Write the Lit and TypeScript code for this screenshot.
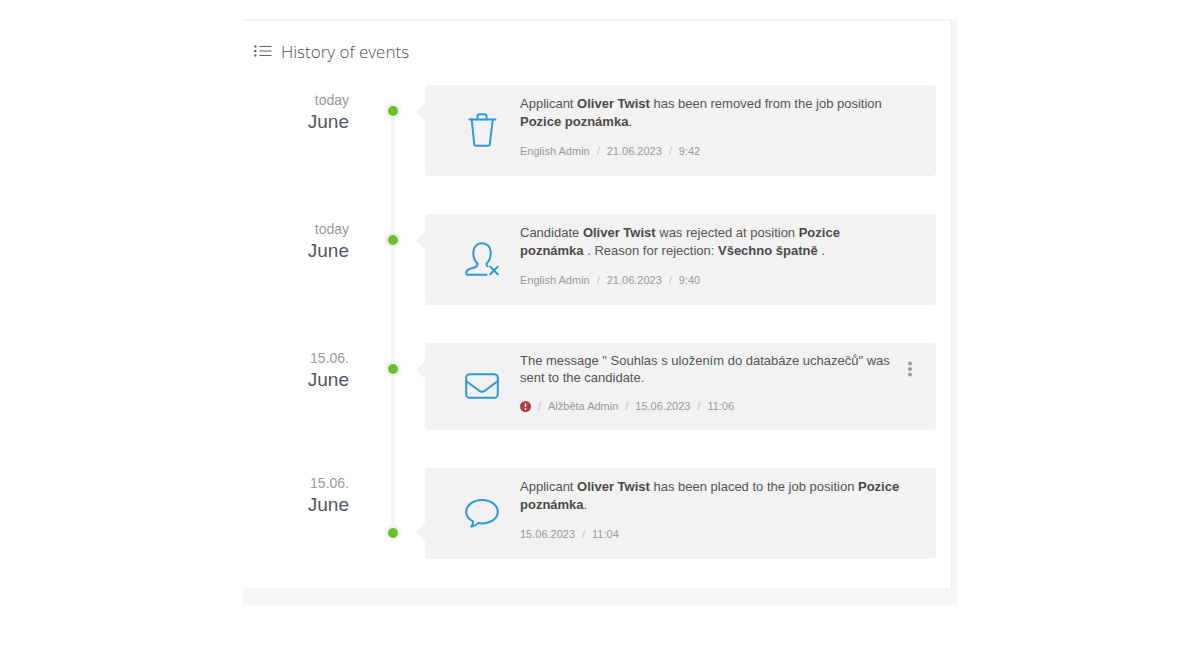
import { LitElement, html, css, svg, nothing } from "lit";
import { customElement, property } from "lit/decorators.js";
import { classMap } from "lit/directives/class-map.js";

type IconName = "trash" | "rejected" | "mail" | "comment";

interface HistoryEvent {
  day: string;
  month: string;
  icon: IconName;
  text: unknown;
  meta: string[];
  alert?: boolean;
  menu?: boolean;
}

const icons = {
  trash: svg`
    <path d="M4.5 6.5H30.5" />
    <path d="M12.5 6.5V3.2Q12.5 1.2 14.5 1.2H19.5Q21.5 1.2 21.5 3.2V6.5" />
    <path d="M6.7 6.5L9.2 31Q9.4 32.8 11.2 32.8H22.8Q24.6 32.8 24.8 31L27.8 6.5" />`,
  rejected: svg`
    <path d="M21.5 32.8H3.2Q1.2 32.8 1.3 30.6C1.5 27.8 4 26.8 6.8 26.2C10.8 25.3 12.8 24.2 12.6 21.6C10.2 19.6 8.3 15.5 8.3 10.6C8.3 4.8 12 1.2 17 1.2C22 1.2 25.8 4.8 25.8 10.6C25.8 15.5 24 19.4 21.6 21.6C21.3 22.8 21.6 23.4 22.4 24.2" />
    <path d="M25.2 24.6L32.8 32.2M32.8 24.6L25.2 32.2" />`,
  mail: svg`
    <rect x="1.2" y="5.2" width="31.6" height="23.6" rx="3.6" />
    <path d="M1.4 12.2L14.2 21.8Q17 23.6 19.8 21.8L32.6 12.2" />`,
  comment: svg`
    <path d="M17 4C25.6 4 32.8 9 32.8 15.8C32.8 22.6 25.6 27.4 17 27.4C15.6 27.4 14.3 27.3 13.1 27.1C11 29.4 9.2 30.4 6.4 30.8C7.8 28.8 8.2 27.4 8 25.4C3.8 23.2 1.2 19.8 1.2 15.8C1.2 9 8.4 4 17 4Z" />`,
};

const events: HistoryEvent[] = [
  {
    day: "today",
    month: "June",
    icon: "trash",
    text: html`Applicant <b>Oliver Twist</b> has been removed from the job position <b>Pozice poznámka</b>.`,
    meta: ["English Admin", "21.06.2023", "9:42"],
  },
  {
    day: "today",
    month: "June",
    icon: "rejected",
    text: html`Candidate <b>Oliver Twist</b> was rejected at position <b>Pozice poznámka</b> . Reason for rejection: <b>Všechno špatně</b> .`,
    meta: ["English Admin", "21.06.2023", "9:40"],
  },
  {
    day: "15.06.",
    month: "June",
    icon: "mail",
    text: html`The message " Souhlas s uložením do databáze uchazečů" was sent to the candidate.`,
    meta: ["Alžběta Admin", "15.06.2023", "11:06"],
    alert: true,
    menu: true,
  },
  {
    day: "15.06.",
    month: "June",
    icon: "comment",
    text: html`Applicant <b>Oliver Twist</b> has been placed to the job position <b>Pozice poznámka</b>.`,
    meta: ["15.06.2023", "11:04"],
  },
];

@customElement("history-card")
class HistoryCard extends LitElement {
  @property({ attribute: false }) event!: HistoryEvent;

  static styles = css`
    :host {
      display: block;
    }
    .card {
      display: grid;
      grid-template-columns: 34px minmax(0, 1fr) 36px;
      padding: 10px 0 17px 40px;
      border-radius: 4px;
      background: #f2f2f2;
    }
    .icon {
      align-self: center;
      width: 34px;
      height: 34px;
      margin-top: 5px;
      fill: none;
      stroke: #2e97de;
      stroke-width: 2;
      stroke-linejoin: round;
      stroke-linecap: round;
    }
    .body {
      padding-left: 21px;
    }
    .text {
      margin: 0;
      font-size: 13px;
      line-height: 18px;
      color: #555;
    }
    .text b {
      color: #4a4a4a;
    }
    .compact {
      padding: 9px 0 16px 40px;
    }
    .compact .text {
      line-height: 17px;
    }
    .meta {
      display: flex;
      align-items: center;
      margin: 12px 0 0;
      padding: 0;
      list-style: none;
      font-size: 11px;
      line-height: 16px;
      color: #999;
    }
    .meta li {
      display: flex;
      align-items: center;
    }
    .meta li + li::before {
      content: "/";
      width: 17px;
      text-align: center;
      color: #c4c4c4;
    }
    .alert {
      width: 11px;
      height: 11px;
    }
    .menu {
      align-self: start;
      display: grid;
      place-items: center;
      width: 20px;
      height: 20px;
      margin: 7px 0 0;
      padding: 0;
      border: 0;
      background: none;
      cursor: pointer;
    }
  `;

  render() {
    const e = this.event;
    return html`
      <article class=${classMap({ card: true, compact: !!e.menu })}>
        <svg class="icon" viewBox="0 0 34 34" aria-hidden="true">${icons[e.icon]}</svg>
        <div class="body">
          <p class="text">${e.text}</p>
          <ul class="meta">
            ${e.alert
              ? html`<li>
                  <svg class="alert" viewBox="0 0 11 11" role="img" aria-label="Alert">
                    <circle cx="5.5" cy="5.5" r="5.5" fill="#b03a3e" />
                    <path d="M5.5 2.4V6" stroke="#fff" stroke-width="1.5" />
                    <circle cx="5.5" cy="8" r="0.9" fill="#fff" />
                  </svg>
                </li>`
              : nothing}
            ${e.meta.map((m) => html`<li>${m}</li>`)}
          </ul>
        </div>
        ${e.menu
          ? html`<button class="menu" type="button" aria-label="More actions">
              <svg width="4" height="16" viewBox="0 0 4 16" fill="#9b9b9b" aria-hidden="true">
                <circle cx="2" cy="2.6" r="2" />
                <circle cx="2" cy="8" r="2" />
                <circle cx="2" cy="13.4" r="2" />
              </svg>
            </button>`
          : nothing}
      </article>
    `;
  }
}

@customElement("app-root")
class AppRoot extends LitElement {
  static styles = css`
    :host {
      display: block;
      padding: 19px 16px;
      font-family: "Liberation Sans", Arial, sans-serif;
    }
    .frame {
      max-width: 714px;
      margin: 0 auto;
      padding: 2px 6px 17px 0;
      box-sizing: border-box;
      background: #f6f6f6;
    }
    .panel {
      padding: 17px 15px 29px 0;
      border-top-right-radius: 4px;
      background: #fff;
      box-shadow: 1px 0 2px rgba(0, 0, 0, 0.05);
    }
    .header {
      display: flex;
      align-items: center;
      gap: 9px;
      padding: 0 0 19px 11px;
    }
    .list-icon {
      margin-bottom: 2px;
    }
    .title {
      margin: 0;
      font-family: "Open Sans", sans-serif;
      font-size: 17px;
      font-weight: 300;
      line-height: 28px;
      color: #4c505a;
    }
    .timeline {
      margin: 0;
      padding: 0;
      list-style: none;
    }
    .row {
      display: grid;
      grid-template-columns: 118px 16px minmax(0, 1fr);
      column-gap: 24px;
    }
    .date {
      padding: 6px 12px 0 0;
      text-align: right;
    }
    .day,
    .month {
      display: block;
    }
    .day {
      font-size: 14px;
      line-height: 18px;
      color: #999;
    }
    .month {
      font-size: 19px;
      line-height: 26px;
      color: #525766;
    }
    .rail {
      display: flex;
      flex-direction: column;
      align-items: center;
    }
    .line {
      width: 4px;
      background: #f3f3f3;
    }
    .short {
      flex: 0 0 18px;
    }
    .long {
      flex: 1;
    }
    .blank {
      background: none;
    }
    .dot {
      flex: none;
      box-sizing: border-box;
      width: 16px;
      height: 16px;
      border: 3px solid #f2f2f2;
      border-radius: 50%;
      background: #6cbf2c;
    }
    .entry {
      position: relative;
      padding-bottom: 38px;
    }
    .row:last-child .entry {
      padding-bottom: 0;
    }
    .entry::before {
      content: "";
      position: absolute;
      top: 18px;
      left: -9px;
      border: 9px solid transparent;
      border-left: 0;
      border-right-color: #f2f2f2;
    }
    .row:last-child .entry::before {
      top: auto;
      bottom: 18px;
    }
  `;

  render() {
    const last = events.length - 1;
    return html`
      <main class="frame">
        <section class="panel" aria-labelledby="title">
          <header class="header">
            <svg class="list-icon" width="18" height="12" viewBox="0 0 18 12" aria-hidden="true">
              <path d="M5.5 1.5H17.5M5.5 6H17.5M5.5 10.5H17.5" stroke="#5c6069" stroke-width="1.2" />
              <path d="M0.4 1.5H2.4M0.4 6H2.4M0.4 10.5H2.4" stroke="#454a55" stroke-width="2" />
            </svg>
            <h2 class="title" id="title">History of events</h2>
          </header>
          <ol class="timeline">
            ${events.map(
              (e, i) => html`
                <li class="row">
                  <div class="date">
                    <span class="day">${e.day}</span>
                    <span class="month">${e.month}</span>
                  </div>
                  <div class="rail">
                    <span class=${classMap({ line: true, short: i < last, long: i === last, blank: i === 0 })}></span>
                    <span class="dot"></span>
                    <span class=${classMap({ line: true, short: i === last, long: i < last, blank: i === last })}></span>
                  </div>
                  <div class="entry"><history-card .event=${e}></history-card></div>
                </li>
              `
            )}
          </ol>
        </section>
      </main>
    `;
  }
}
